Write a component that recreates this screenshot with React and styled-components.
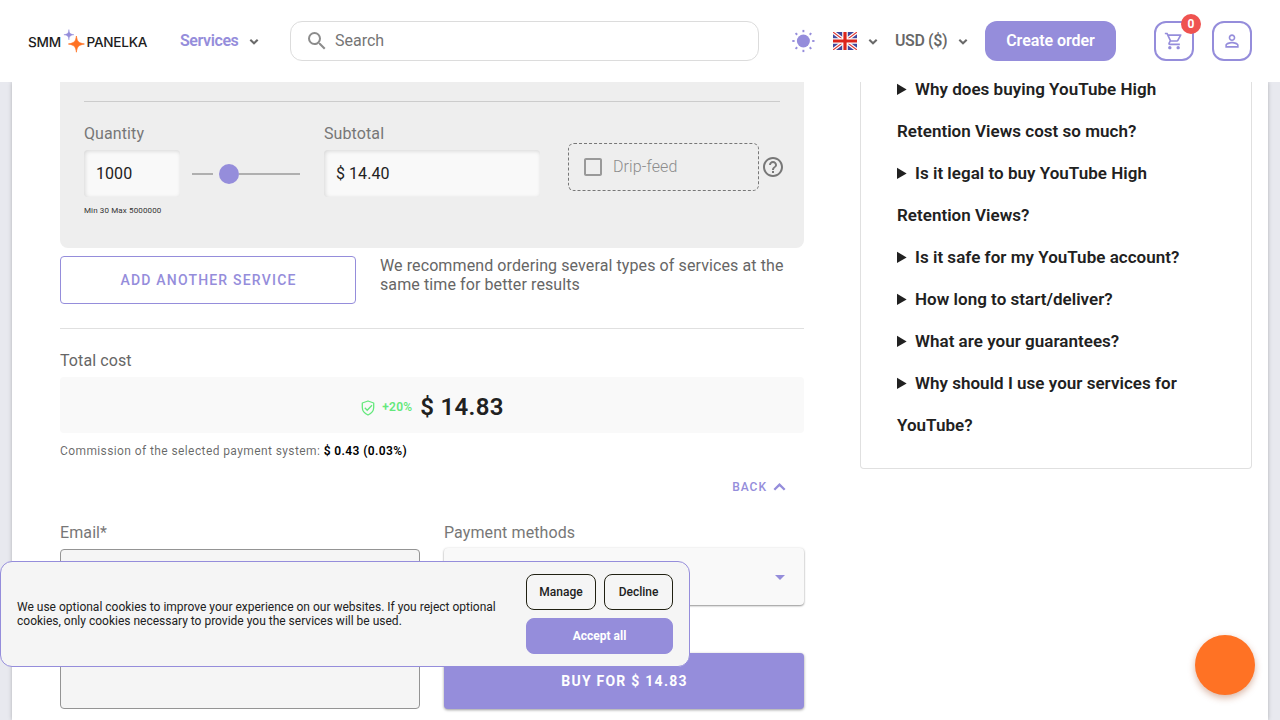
import React from "react";
import styled, { createGlobalStyle, css } from "styled-components";
import {
  MdSearch,
  MdOutlineShoppingCart,
  MdPersonOutline,
  MdHelpOutline,
  MdCheckBoxOutlineBlank,
  MdArrowDropDown,
} from "react-icons/md";

const PURPLE = "#958ddb";
const MUTED = "rgba(0, 0, 0, 0.6)";
const INK = "#212121";

const GlobalStyle = createGlobalStyle`
  *, *::before, *::after { box-sizing: border-box; }
  body {
    margin: 0;
    background: #e8e9ef;
    color: ${INK};
    font-family: Roboto, "Liberation Sans", sans-serif;
    font-size: 16px;
    overflow: hidden;
  }
  button, input, textarea { font-family: inherit; }
`;

const Page = styled.div`
  display: flex;
  flex-direction: column;
  height: 720px;
  overflow: hidden;
`;

/* ---------- header ---------- */

const Header = styled.header`
  display: flex;
  align-items: center;
  flex: none;
  height: 82px;
  padding: 0 28px;
  background: #fff;
  & > * { flex: none; }
`;

const Logo = styled.a`
  display: flex;
  align-items: center;
  width: 120px;
  height: 24px;
  font: 500 13.6px/24px Inter, sans-serif;
  color: #1d1d1d;
  white-space: nowrap;
`;

const LogoWord = styled.span`
  width: ${(p) => p.$width}px;
  padding-top: 1px;
  letter-spacing: ${(p) => p.$spacing}px;
`;

const LogoStars = styled.svg`
  width: 25px;
  height: 28px;
  flex: none;
`;

const MenuButton = styled.button`
  display: flex;
  align-items: center;
  justify-content: space-between;
  width: ${(p) => p.$width}px;
  height: 40px;
  margin-left: ${(p) => p.$left}px;
  padding: 0;
  border: 0;
  background: none;
  color: ${(p) => (p.$accent ? PURPLE : MUTED)};
  font-size: 16px;
  font-weight: 600;
  letter-spacing: -0.4px;
  white-space: nowrap;
`;

const MenuText = styled.span`
  padding-bottom: 1px;
`;

const SearchBox = styled.label`
  display: flex;
  align-items: center;
  gap: 6px;
  width: 469px;
  height: 40px;
  margin-left: 31px;
  padding-left: 14px;
  border: 1px solid #dcdcdc;
  border-radius: 12px;
  color: #8c8c8c;
`;

const SearchInput = styled.input`
  flex: 1;
  padding: 0 0 2px;
  border: 0;
  outline: 0;
  background: none;
  font-size: 16px;
  &::placeholder { color: #757575; }
`;

const SunIcon = styled.svg`
  width: 24px;
  height: 24px;
  margin-left: 32px;
`;

const Flag = styled.svg`
  display: block;
  width: 24px;
  height: 18px;
`;

const CreateOrder = styled.button`
  width: 131px;
  height: 40px;
  margin-left: 17px;
  padding: 0 0 2px;
  border: 0;
  border-radius: 12px;
  background: ${PURPLE};
  color: #fff;
  font-size: 16px;
  font-weight: 600;
  letter-spacing: -0.05px;
`;

const IconButton = styled.button`
  position: relative;
  display: flex;
  align-items: center;
  justify-content: center;
  width: 40px;
  height: 40px;
  margin-left: ${(p) => p.$left}px;
  padding: 0;
  border: 2px solid ${PURPLE};
  border-radius: 12px;
  background: #fff;
  color: ${PURPLE};
`;

const Badge = styled.span`
  position: absolute;
  top: -9px;
  right: -9px;
  width: 20px;
  height: 20px;
  border-radius: 10px;
  background: #ef5350;
  color: #fff;
  font-size: 12px;
  font-weight: 700;
  line-height: 20px;
  text-align: center;
`;

/* ---------- page body ---------- */

const Panel = styled.main`
  display: flex;
  align-items: flex-start;
  gap: 56px;
  flex: 1;
  min-height: 0;
  margin: 0 12px;
  padding: 0 16px 0 48px;
  background: #fff;
  box-shadow: 0 0 4px rgba(0, 0, 0, 0.25);
  clip-path: inset(0 -12px);
`;

const OrderColumn = styled.section`
  width: 744px;
  flex: none;
`;

const Divider = styled.hr`
  height: 1px;
  margin: 0;
  border: 0;
  background: ${(p) => p.$color};
`;

const ServiceCard = styled.div`
  height: 166px;
  padding: 19px 24px 0;
  border-radius: 0 0 8px 8px;
  background: #eee;
`;

const ServiceFields = styled.div`
  display: flex;
  align-items: flex-start;
  margin-top: 22px;
  margin-right: -8px;
`;

const Field = styled.div`
  width: ${(p) => p.$width}px;
  flex: none;
  & + & { margin-left: 24px; }
`;

const FieldLabel = styled.div`
  height: ${(p) => p.$height || 26}px;
  color: #777;
  font-size: 16px;
  line-height: 19px;
  letter-spacing: 0.1px;
`;

const TotalLabel = styled(FieldLabel)`
  height: 48px;
  padding-top: 22px;
  color: #666;
`;

const InsetInput = styled.input`
  display: block;
  width: ${(p) => p.$width}px;
  height: 47px;
  padding: 0 12px;
  border: 0;
  border-radius: 4px;
  background: #f9f9f9;
  box-shadow: inset 1px 1px 4px rgba(0, 0, 0, 0.14);
  color: ${INK};
  font-size: 16px;
  letter-spacing: 0.05px;
  outline: 0;
`;

const QuantityRow = styled.div`
  display: flex;
  align-items: center;
  gap: 12px;
`;

const Slider = styled.div`
  display: flex;
  align-items: center;
  width: 108px;
`;

const SliderTrack = styled.span`
  height: 2px;
  background: #afafaf;
  ${(p) => (p.$width ? css`width: ${p.$width}px; margin-right: 6px;` : css`flex: 1;`)}
`;

const SliderKnob = styled.span`
  width: 20px;
  height: 20px;
  border-radius: 50%;
  background: ${PURPLE};
`;

const Limits = styled.div`
  margin-top: 8px;
  color: #333;
  font-size: 8px;
  line-height: 11px;
  letter-spacing: 0.13px;
`;

const DripFeed = styled.div`
  display: flex;
  align-items: center;
  gap: 8px;
  width: 191px;
  height: 48px;
  margin: 19px 4px 0 28px;
  padding-left: 12px;
  border: 1px dashed #777;
  border-radius: 6px;
  color: #999;
  font-weight: 300;
  letter-spacing: 0.1px;
`;

const DripLabel = styled.span`
  padding-bottom: 2px;
  color: #8c8c8c;
`;

const HelpIcon = styled(MdHelpOutline)`
  width: 24px;
  height: 24px;
  margin: 31px 0 0 -2px;
  color: #777;
`;

const AddRow = styled.div`
  display: flex;
  gap: 24px;
  height: 72px;
  margin-top: 8px;
`;

const AddButton = styled.button`
  width: 296px;
  height: 48px;
  padding: 0 0 0 1px;
  border: 1px solid ${PURPLE};
  border-radius: 4px;
  background: #fff;
  color: ${PURPLE};
  font-size: 14px;
  font-weight: 500;
  letter-spacing: 1.2px;
`;

const Advice = styled.p`
  flex: 1;
  margin: 0;
  color: #666;
  line-height: 19px;
  letter-spacing: 0.1px;
`;

const TotalBox = styled.div`
  display: flex;
  align-items: center;
  justify-content: center;
  height: 56px;
  padding: 4px 0 0 1px;
  border-radius: 4px;
  background: #f9f9f9;
  font-size: 24px;
  font-weight: 600;
  letter-spacing: 0.3px;
  white-space: nowrap;
  line-height: 28px;
`;

const Cashback = styled.span`
  display: flex;
  align-items: center;
  gap: 7px;
  margin-right: 8px;
  color: #64e87c;
  font-size: 12px;
  font-weight: 600;
  letter-spacing: 0.2px;
`;

const ShieldIcon = styled.svg`
  width: 14px;
  height: 16px;
  margin-top: 2px;
`;

const Commission = styled.div`
  margin-top: 10px;
  color: ${MUTED};
  font-size: 12px;
  line-height: 16px;
  letter-spacing: 0.4px;
  & b { color: #000; font-weight: 600; }
`;

const BackButton = styled.button`
  display: flex;
  align-items: center;
  gap: 6px;
  height: 24px;
  margin: 16px 18px 0 auto;
  padding: 0;
  border: 0;
  background: none;
  color: ${PURPLE};
  font-size: 12px;
  font-weight: 500;
  letter-spacing: 1px;
`;

const PaymentRow = styled.div`
  display: flex;
  margin-top: 24px;
`;

const EmailInput = styled.textarea`
  display: block;
  width: 360px;
  height: 160px;
  border: 1px solid #949494;
  border-radius: 4px;
  background: #f5f5f5;
  resize: none;
`;

const PaymentSelect = styled.div`
  display: flex;
  align-items: center;
  justify-content: flex-end;
  height: 57px;
  padding-right: 12px;
  border-radius: 4px;
  background: #f9f9f9;
  box-shadow: 0 1px 2px rgba(0, 0, 0, 0.4), 0 0 3px rgba(0, 0, 0, 0.08);
  color: ${PURPLE};
`;

const BuyButton = styled.button`
  display: block;
  width: 100%;
  height: 56px;
  margin-top: 48px;
  padding: 0 0 0 1px;
  border: 0;
  border-radius: 4px;
  background: ${PURPLE};
  box-shadow: 0 1px 3px rgba(0, 0, 0, 0.4);
  color: #fff;
  font-size: 14px;
  font-weight: 700;
  letter-spacing: 1.25px;
`;

/* ---------- questions ---------- */

const FaqCard = styled.aside`
  width: 392px;
  height: 401px;
  margin-top: -14px;
  padding: 0 36px;
  border: 1px solid #e0e0e0;
  border-top: 0;
  border-radius: 4px;
`;

const Question = styled.summary`
  color: ${INK};
  font-size: 17px;
  font-weight: 600;
  line-height: 42px;
  letter-spacing: 0.025px;
`;

/* ---------- overlays ---------- */

const CookieBar = styled.div`
  position: fixed;
  left: 0;
  top: 561px;
  display: flex;
  align-items: center;
  justify-content: space-between;
  width: 690px;
  height: 106px;
  padding: 0 16px;
  border: 1px solid ${PURPLE};
  border-radius: 12px;
  background: #f5f5f5;
`;

const CookieText = styled.p`
  width: 490px;
  margin: 0;
  font-size: 12px;
  line-height: 14px;
`;

const CookieActions = styled.div`
  display: grid;
  grid-template-columns: 70px 69px;
  gap: 8px;
`;

const CookieButton = styled.button`
  height: 36px;
  padding: 0;
  border: 1px solid ${(p) => (p.$primary ? PURPLE : "#212112")};
  border-radius: 8px;
  background: ${(p) => (p.$primary ? PURPLE : "transparent")};
  color: ${(p) => (p.$primary ? "#fff" : INK)};
  font-size: 12px;
  font-weight: ${(p) => (p.$primary ? 700 : 500)};
  ${(p) => p.$primary && css`grid-column: 1 / -1;`}
`;

const ChatBubble = styled.button`
  position: fixed;
  left: 1195px;
  top: 635px;
  width: 60px;
  height: 60px;
  border: 0;
  border-radius: 50%;
  background: #ff7224;
  box-shadow: 0 3px 7px rgba(160, 70, 30, 0.4);
`;

function Chevron({ width = 10, up = false, stroke = 2.1, color = "#6a6a6a" }) {
  return (
    <svg width={width} height={width * 0.7} viewBox="0 0 10 7" fill="none">
      <path
        d={up ? "M1 6 5 2 9 6" : "M1.3 1.8 5 5.2 8.7 1.8"}
        stroke={color}
        strokeWidth={stroke}
      />
    </svg>
  );
}

function UnionJack() {
  return (
    <Flag viewBox="0 0 24 18">
      <rect width="24" height="18" fill="#41479b" />
      <path d="M0 0 24 18M24 0 0 18" stroke="#fff" strokeWidth="3.6" />
      <path d="M0 0 24 18M24 0 0 18" stroke="#e33b35" strokeWidth="1.1" />
      <path d="M12 0V18M0 9H24" stroke="#fff" strokeWidth="5.6" />
      <path d="M12 0V18M0 9H24" stroke="#dc251c" strokeWidth="3.2" />
    </Flag>
  );
}

const RAYS = [0, 45, 90, 135, 180, 225, 270, 315];

const QUESTIONS = [
  "Why does buying YouTube High Retention Views cost so much?",
  "Is it legal to buy YouTube High Retention Views?",
  "Is it safe for my YouTube account?",
  "How long to start/deliver?",
  "What are your guarantees?",
  "Why should I use your services for YouTube?",
];

export default function App() {
  return (
    <Page>
      <GlobalStyle />
      <Header>
        <Logo>
          <LogoWord $width={33.5} $spacing={-0.25}>SMM</LogoWord>
          <LogoStars viewBox="0 0 25 28">
            <path d="M6.9 2.6C7.2 6.2 8.1 7.2 11.9 7.7C8.1 8.2 7.2 9.2 6.9 12.8C6.6 9.2 5.7 8.2 1.9 7.7C5.7 7.2 6.6 6.2 6.9 2.6Z" fill={PURPLE} stroke={PURPLE} strokeWidth=".5" />
            <path d="M14.4 9C15.1 14.4 16.6 16 22.4 17C16.6 18 15.1 19.6 14.4 25.2C13.7 19.6 12.2 18 6.4 17C12.2 16 13.7 14.4 14.4 9Z" fill="#ff7224" stroke="#ff7224" strokeWidth=".7" />
          </LogoStars>
          <LogoWord $width={61} $spacing={-0.25}>PANELKA</LogoWord>
        </Logo>
        <MenuButton $left={32} $width={79} $accent>
          <MenuText>Services</MenuText> <Chevron />
        </MenuButton>
        <SearchBox>
          <MdSearch size={24} />
          <SearchInput placeholder="Search" />
        </SearchBox>
        <SunIcon viewBox="0 0 24 24">
          <circle cx="12.4" cy="12" r="6.5" fill={PURPLE} />
          {RAYS.map((a) => (
            <path key={a} d="M12.4 .9V3.2" stroke={PURPLE} strokeWidth="1.9" transform={`rotate(${a} 12.4 12)`} />
          ))}
        </SunIcon>
        <MenuButton $left={18} $width={45}>
          <UnionJack /> <Chevron />
        </MenuButton>
        <MenuButton $left={17} $width={73}>
          <MenuText>USD ($)</MenuText> <Chevron />
        </MenuButton>
        <CreateOrder>Create order</CreateOrder>
        <IconButton $left={38}>
          <MdOutlineShoppingCart size={20} />
          <Badge>0</Badge>
        </IconButton>
        <IconButton $left={18}>
          <MdPersonOutline size={20} />
        </IconButton>
      </Header>

      <Panel>
        <OrderColumn>
          <ServiceCard>
            <Divider $color="#ccc" />
            <ServiceFields>
              <Field $width={216}>
                <FieldLabel>Quantity</FieldLabel>
                <QuantityRow>
                  <InsetInput $width={96} defaultValue="1000" />
                  <Slider>
                    <SliderTrack $width={21} />
                    <SliderKnob />
                    <SliderTrack />
                  </Slider>
                </QuantityRow>
                <Limits>Min 30 Max 5000000</Limits>
              </Field>
              <Field $width={216}>
                <FieldLabel>Subtotal</FieldLabel>
                <InsetInput $width={216} defaultValue="$ 14.40" />
              </Field>
              <DripFeed>
                <MdCheckBoxOutlineBlank size={24} />
                <DripLabel>Drip-feed</DripLabel>
              </DripFeed>
              <HelpIcon />
            </ServiceFields>
          </ServiceCard>

          <AddRow>
            <AddButton>ADD ANOTHER SERVICE</AddButton>
            <Advice>
              We recommend ordering several types of services at the same time for better results
            </Advice>
          </AddRow>
          <Divider $color="#e0e0e0" />

          <TotalLabel>Total cost</TotalLabel>
          <TotalBox>
            <Cashback>
              <ShieldIcon viewBox="0 0 14 16" fill="none" stroke="currentColor" strokeWidth="1.3">
                <path d="M7 1 12.7 3V7.6C12.7 11 10.4 13.6 7 15 3.6 13.6 1.3 11 1.3 7.6V3Z" strokeLinejoin="round" />
                <path d="M3.8 7.8 6.2 10.2 11 5.2" />
              </ShieldIcon>
              +20%
            </Cashback>
            $ 14.83
          </TotalBox>
          <Commission>
            Commission of the selected payment system: <b>$ 0.43 (0.03%)</b>
          </Commission>
          <BackButton>
            BACK <Chevron up width={13} stroke={1.8} color={PURPLE} />
          </BackButton>

          <PaymentRow>
            <Field $width={360}>
              <FieldLabel>Email*</FieldLabel>
              <EmailInput />
            </Field>
            <Field $width={360}>
              <FieldLabel $height={25}>Payment methods</FieldLabel>
              <PaymentSelect>
                <MdArrowDropDown size={24} />
              </PaymentSelect>
              <BuyButton>BUY FOR $ 14.83</BuyButton>
            </Field>
          </PaymentRow>
        </OrderColumn>

        <FaqCard>
          {QUESTIONS.map((q) => (
            <details key={q}>
              <Question>{q}</Question>
            </details>
          ))}
        </FaqCard>
      </Panel>

      <CookieBar>
        <CookieText>
          We use optional cookies to improve your experience on our websites. If you reject optional
          cookies, only cookies necessary to provide you the services will be used.
        </CookieText>
        <CookieActions>
          <CookieButton>Manage</CookieButton>
          <CookieButton>Decline</CookieButton>
          <CookieButton $primary>Accept all</CookieButton>
        </CookieActions>
      </CookieBar>
      <ChatBubble aria-label="Chat" />
    </Page>
  );
}
